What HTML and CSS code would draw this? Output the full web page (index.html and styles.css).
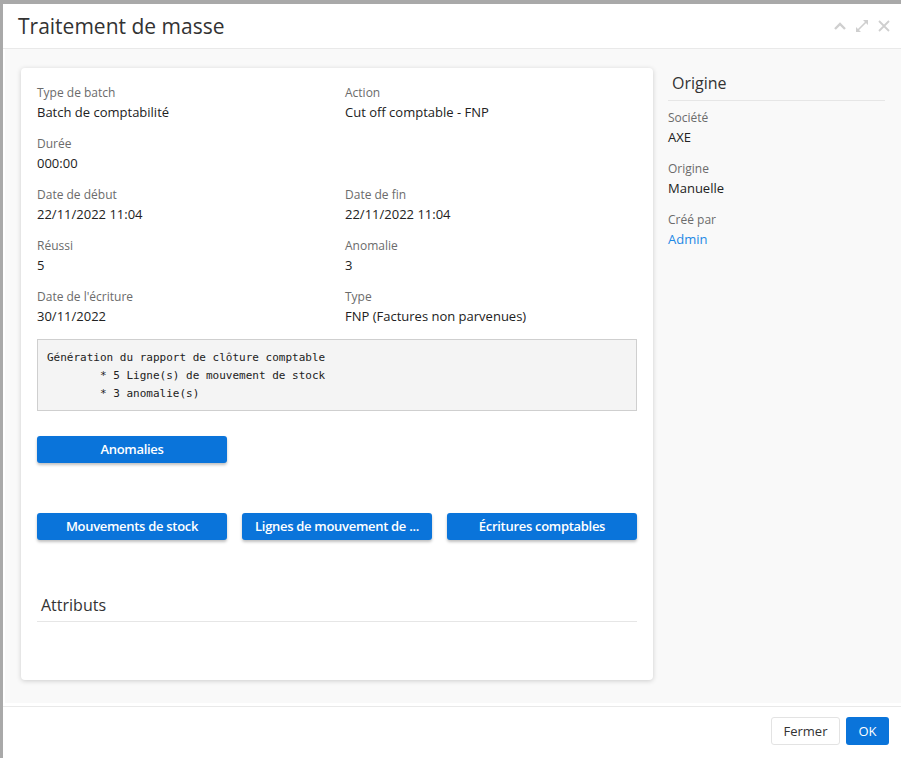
FILE: index.html
```html
<!DOCTYPE html>
<html lang="fr">
<head>
<meta charset="utf-8">
<title>Traitement de masse</title>
<link rel="stylesheet" href="styles.css">
</head>
<body>
<div class="modal">
  <div class="modal-header">
    <h1 class="modal-title">Traitement de masse</h1>
    <div class="header-tools">
      <svg class="tool" width="14" height="14" viewBox="0 0 14 14"><path d="M2 10 L7 5 L12 10" fill="none" stroke="#cfcfcf" stroke-width="2.4"/></svg>
      <svg class="tool" width="14" height="14" viewBox="0 0 14 14"><path d="M8 1 H13 V6 Z M6 13 H1 V8 Z" fill="#cfcfcf"/><path d="M12 2 L2 12" stroke="#cfcfcf" stroke-width="1.6"/></svg>
      <svg class="tool" width="14" height="14" viewBox="0 0 14 14"><path d="M2 2 L12 12 M12 2 L2 12" stroke="#cfcfcf" stroke-width="1.8"/></svg>
    </div>
  </div>
  <div class="modal-body">
    <div class="card">
      <div class="fields">
        <div class="field"><div class="label">Type de batch</div><div class="value">Batch de comptabilité</div></div>
        <div class="field"><div class="label">Action</div><div class="value">Cut off comptable - FNP</div></div>
        <div class="field"><div class="label">Durée</div><div class="value">000:00</div></div>
        <div class="field"></div>
        <div class="field"><div class="label">Date de début</div><div class="value">22/11/2022 11:04</div></div>
        <div class="field"><div class="label">Date de fin</div><div class="value">22/11/2022 11:04</div></div>
        <div class="field"><div class="label">Réussi</div><div class="value">5</div></div>
        <div class="field"><div class="label">Anomalie</div><div class="value">3</div></div>
        <div class="field"><div class="label">Date de l'écriture</div><div class="value">30/11/2022</div></div>
        <div class="field"><div class="label">Type</div><div class="value">FNP (Factures non parvenues)</div></div>
      </div>
      <pre class="log">Génération du rapport de clôture comptable
        * 5 Ligne(s) de mouvement de stock
        * 3 anomalie(s)</pre>
      <div class="btn-row first">
        <button class="btn-primary">Anomalies</button>
      </div>
      <div class="btn-row second">
        <button class="btn-primary">Mouvements de stock</button>
        <button class="btn-primary">Lignes de mouvement de ...</button>
        <button class="btn-primary">Écritures comptables</button>
      </div>
      <h2 class="section-title">Attributs</h2>
    </div>
    <div class="side">
      <h2 class="section-title side-title">Origine</h2>
      <div class="field"><div class="label">Société</div><div class="value">AXE</div></div>
      <div class="field"><div class="label">Origine</div><div class="value">Manuelle</div></div>
      <div class="field"><div class="label">Créé par</div><div class="value link">Admin</div></div>
    </div>
  </div>
  <div class="modal-footer">
    <button class="btn-default">Fermer</button>
    <button class="btn-ok">OK</button>
  </div>
</div>
</body>
</html>
```
FILE: styles.css
```css
* { box-sizing: border-box; }
html, body { margin: 0; padding: 0; }
body {
  background: #a9a9a9;
  font-family: "Open Sans", "Liberation Sans", sans-serif;
  color: #222;
  overflow: hidden;
}
.modal {
  margin: 4px 0 0 3px;
  width: 898px;
  height: 754px;
  background: #fff;
  display: flex;
  flex-direction: column;
}
.modal-header {
  height: 45px;
  border-bottom: 1px solid #e9e9e9;
  display: flex;
  align-items: center;
  justify-content: space-between;
  padding: 0 10px 0 15px;
}
.modal-title {
  margin: 0;
  font-size: 21px;
  font-weight: 400;
  color: #333;
  line-height: 28px;
  padding-bottom: 1px;
}
.header-tools {
  display: flex;
  gap: 8px;
  align-items: center;
}
.tool { display: block; }
.modal-body {
  flex: 1;
  margin: 0 0 3px 2px;
  background: #f9f9f9;
  display: flex;
  align-items: flex-start;
  gap: 15px;
  padding: 19px 0 0 16px;
}
.card {
  width: 632px;
  height: 612px;
  background: #fff;
  border-radius: 4px;
  box-shadow: 0 1px 5px rgba(0,0,0,0.18);
  padding: 16px 16px 0 16px;
}
.fields {
  display: grid;
  grid-template-columns: 308px 1fr;
}
.field { margin-bottom: 13px; }
.label {
  font-size: 12px;
  line-height: 18px;
  color: #6b6b6b;
}
.value {
  font-size: 13px;
  line-height: 20px;
  color: #222;
  min-height: 20px;
}
.value.link { color: #1e88e5; }
.fields .field:empty { height: 38px; }
.log {
  margin: 0;
  background: #f4f4f4;
  border: 1px solid #cfcfcf;
  font-family: "DejaVu Sans Mono", "Liberation Mono", monospace;
  font-size: 11px;
  line-height: 18px;
  color: #222;
  padding: 9px 9px 7px 9px;
  white-space: pre;
}
.btn-row { display: flex; gap: 15px; }
.btn-row.first { margin-top: 25px; }
.btn-row.second { margin-top: 50px; }
.btn-primary {
  width: 190px;
  height: 27px;
  border: 0;
  border-radius: 3px;
  background: #0a74da;
  color: #fff;
  font-family: "Open Sans", "Liberation Sans", sans-serif;
  font-size: 13px;
  font-weight: 600;
  letter-spacing: -0.3px;
  box-shadow: 0 2px 3px rgba(0,0,0,0.25);
  padding: 0 6px 2px 6px;
  white-space: nowrap;
}
.section-title {
  margin: 54px 0 0 0;
  font-size: 16px;
  font-weight: 400;
  color: #333;
  line-height: 22px;
  padding: 0 0 5px 4px;
  border-bottom: 1px solid #e6e6e6;
}
.side {
  width: 217px;
  padding-top: 4px;
}
.side-title {
  margin: 0 0 8px 0;
  padding-bottom: 6px;
}
.modal-footer {
  height: 52px;
  border-top: 1px solid #e9e9e9;
  display: flex;
  justify-content: flex-end;
  align-items: flex-start;
  gap: 6px;
  padding: 10px 12px 0 0;
}
.btn-default, .btn-ok {
  height: 28px;
  border-radius: 3px;
  font-family: "Open Sans", "Liberation Sans", sans-serif;
  font-size: 13px;
  padding: 0 0 1px 0;
}
.btn-default {
  width: 69px;
  background: #fff;
  border: 1px solid #e3e3e3;
  color: #333;
}
.btn-ok {
  width: 43px;
  background: #0a74da;
  border: 0;
  color: #fff;
}
```
